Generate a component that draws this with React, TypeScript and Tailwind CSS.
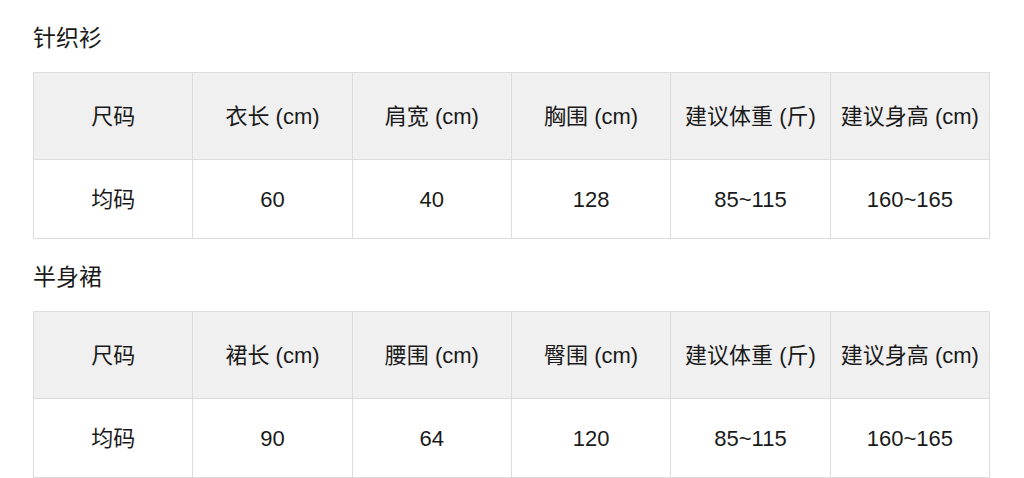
import React from "react";

const font = { fontFamily: '"Liberation Sans", "Noto Sans CJK SC", sans-serif' };

type Section = { title: string; headers: string[]; values: string[] };

const sections: Section[] = [
  {
    title: "针织衫",
    headers: ["尺码", "衣长 (cm)", "肩宽 (cm)", "胸围 (cm)", "建议体重 (斤)", "建议身高 (cm)"],
    values: ["均码", "60", "40", "128", "85~115", "160~165"],
  },
  {
    title: "半身裙",
    headers: ["尺码", "裙长 (cm)", "腰围 (cm)", "臀围 (cm)", "建议体重 (斤)", "建议身高 (cm)"],
    values: ["均码", "90", "64", "120", "85~115", "160~165"],
  },
];

export default function App() {
  return (
    <div className="w-[1024px] h-[478px] bg-white overflow-hidden text-[#1a1a1a]" style={font}>
      {sections.map((s) => (
        <div key={s.title} className="pl-[33px]">
          <div className="h-[72px] pt-[24px] text-[23px] leading-[28px]">{s.title}</div>
          <table className="table-fixed border-collapse w-[957px] text-[22px]">
            <tbody>
              <tr className="bg-[#f0f0f0] h-[87px]">
                {s.headers.map((h) => (
                  <td key={h} className="border border-[#dcdcdc] text-center align-middle p-0 whitespace-nowrap">
                    {h}
                  </td>
                ))}
              </tr>
              <tr className="h-[79px]">
                {s.values.map((v, i) => (
                  <td key={i} className="border border-[#dcdcdc] text-center align-middle p-0">
                    {v}
                  </td>
                ))}
              </tr>
            </tbody>
          </table>
        </div>
      ))}
    </div>
  );
}
